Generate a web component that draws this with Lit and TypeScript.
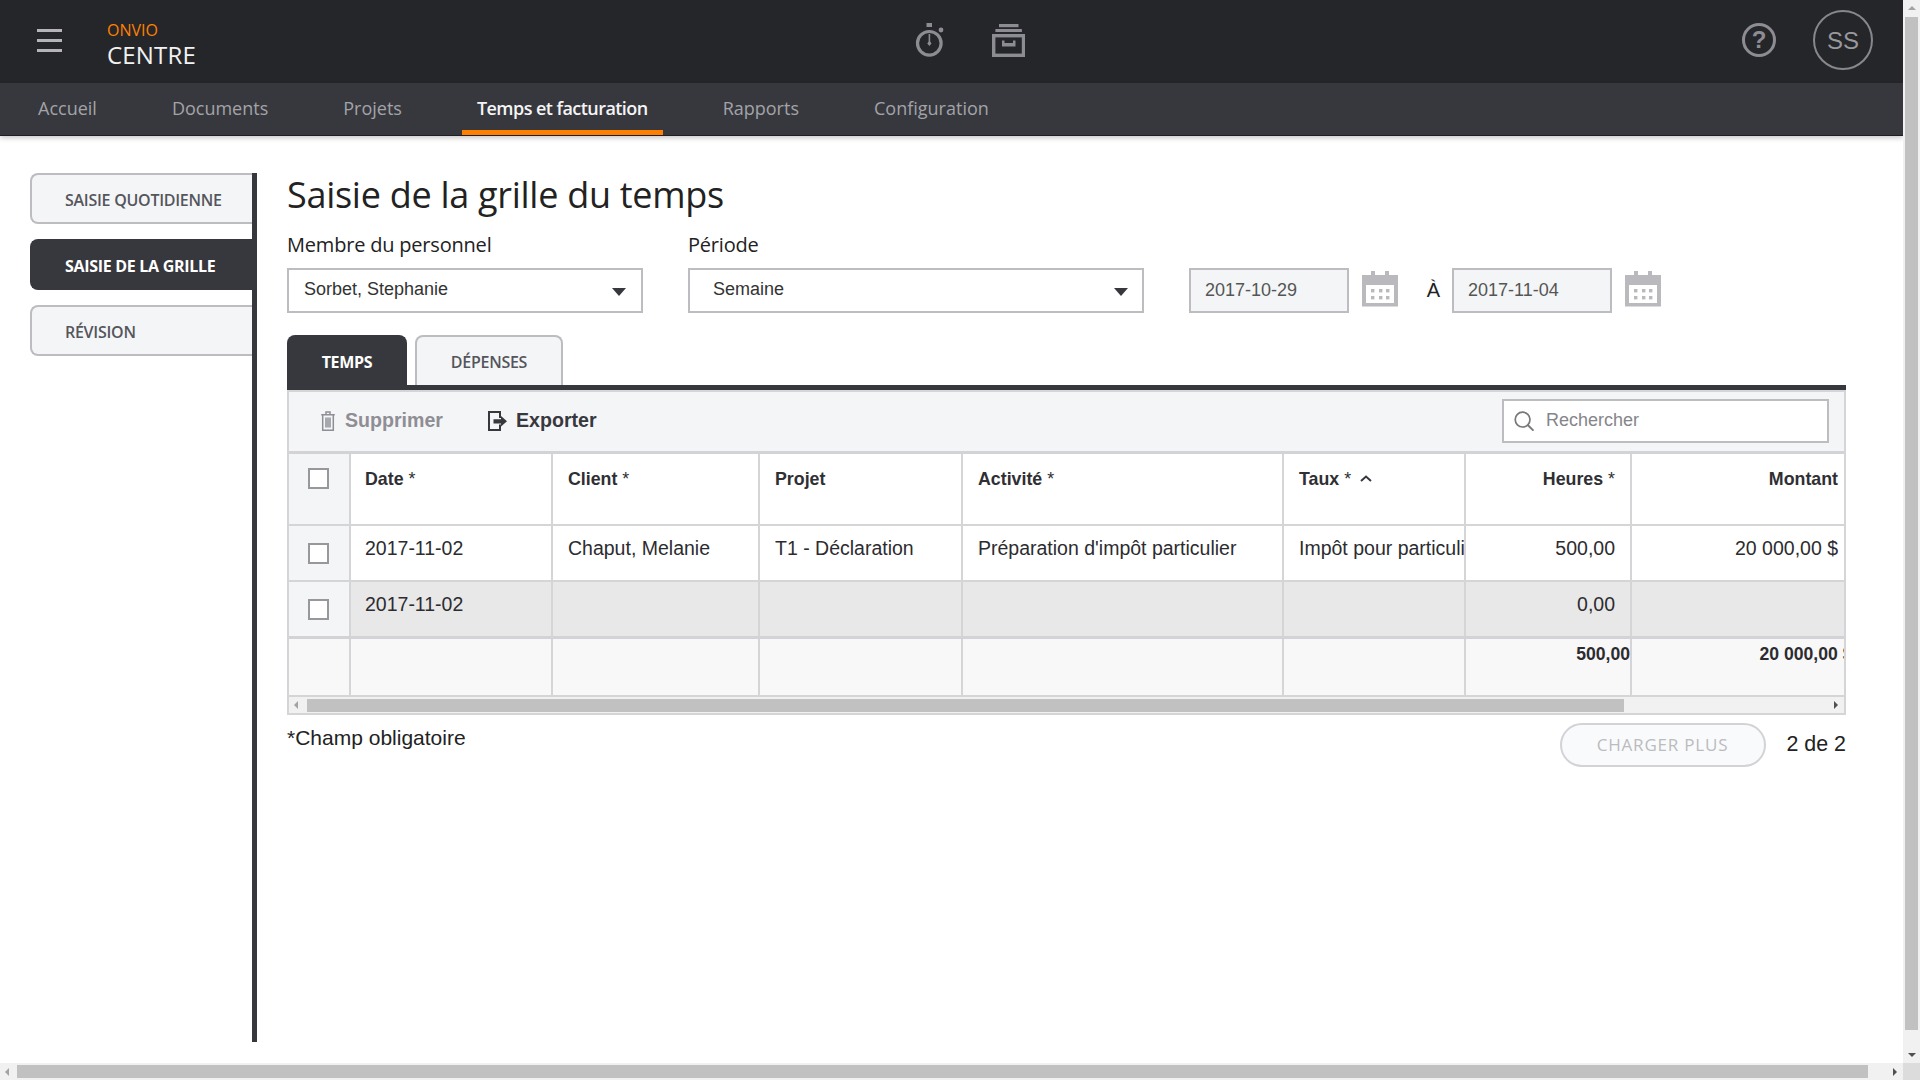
import { LitElement, html, css, svg, unsafeCSS } from "lit";
import { customElement } from "lit/decorators.js";

const COLS = unsafeCSS("62px 202px 207px 203px 321px 182px 166px 212px");

const stopwatch = html`<svg class="ic-watch" viewBox="0 0 29 34" aria-hidden="true">
  <rect x="11.5" y="0" width="5.5" height="4" fill="currentColor"/>
  <circle cx="14.3" cy="20.3" r="11.8" fill="none" stroke="currentColor" stroke-width="3.2"/>
  <circle cx="26" cy="7" r="2.4" fill="currentColor"/>
  <path d="M13.6 11h1.6v7.5l1.3 2-2.1 2.4-2.1-2.4 1.3-2z" fill="currentColor"/>
</svg>`;

const archive = html`<svg class="ic-arch" viewBox="0 0 33 33" aria-hidden="true">
  <rect x="7" y="0" width="19.5" height="3.2" fill="currentColor"/>
  <rect x="3.4" y="5" width="26.5" height="3" fill="currentColor"/>
  <rect x="1.7" y="11.7" width="29.8" height="19.6" fill="none" stroke="currentColor" stroke-width="3.4"/>
  <path d="M10 16.5h2.5v2.6h8.5v-2.6h2.5v6H10z" fill="currentColor"/>
</svg>`;

const calendar = html`<svg class="ic-cal" viewBox="0 0 36 36" aria-hidden="true">
  <path fill="#b9b9be" d="M0 4h9V0h4v4h10V0h4v4h9v31.5H0z"/>
  <rect x="4" y="14" width="28" height="18" fill="#fff"/>
  ${[9, 17, 24].map((x) => [18, 25].map((y) => svg`<rect x=${x} y=${y} width="3.4" height="3.4" fill="#b9b9be"/>`))}
</svg>`;

const trash = html`<svg class="ic-trash" viewBox="0 0 14 20" aria-hidden="true">
  <path fill="none" stroke="currentColor" stroke-width="1.5" d="M.2 3.8h13.6M5 3.6V1h4v2.6M1.7 4v15.2h10.6V4M5 6.5v10M7 6.5v10M9 6.5v10"/>
</svg>`;

const exportIcon = html`<svg class="ic-exp" viewBox="0 0 19 20" aria-hidden="true">
  <path fill="none" stroke="currentColor" stroke-width="2" d="M12 7V1H1v18h11v-5.5"/>
  <path fill="currentColor" d="M5.5 8.2h7.5V5l6 5.3-6 5.2v-3.1H5.5z"/>
</svg>`;

const search = html`<svg class="ic-search" viewBox="0 0 21 20" aria-hidden="true">
  <circle cx="8.6" cy="8.6" r="7.4" fill="none" stroke="currentColor" stroke-width="1.7"/>
  <path d="M13.7 14l5.8 5.6" fill="none" stroke="currentColor" stroke-width="1.9"/>
</svg>`;

@customElement("app-root")
export class AppRoot extends LitElement {
  static styles = css`
    :host {
      display: grid;
      grid-template-columns: 1903px 17px;
      grid-template-rows: 1063px 17px;
      width: 1920px;
      height: 1080px;
      overflow: hidden;
      font-family: "Liberation Sans", Arial, sans-serif;
      color: #222;
      background: #fff;
    }
    * { box-sizing: border-box; }
    .page { display: flex; flex-direction: column; min-width: 0; }

    /* top bars */
    .top {
      height: 83px;
      padding-bottom: 3px;
      background: #25262a;
      display: flex;
      align-items: center;
      flex: none;
      font-family: "Open Sans", sans-serif;
    }
    .burger { width: 25px; margin-left: 37px; display: flex; flex-direction: column; gap: 7px; }
    .burger i { display: block; height: 3px; background: #b4b4b9; }
    .brand { margin-left: 45px; margin-top: 10px; display: flex; flex-direction: column; width: 808px; }
    .brand b { font-weight: 400; font-size: 16px; line-height: 20px; color: #ff8000; }
    .brand span { font-size: 24px; line-height: 30px; color: #f2f2f2; letter-spacing: .2px; }
    .center { display: flex; align-items: center; gap: 48px; color: #8c8c92; }
    .ic-watch { width: 29px; height: 34px; display: block; }
    .ic-arch { width: 33px; height: 33px; display: block; }
    .right { margin-left: auto; display: flex; align-items: center; gap: 37px; margin-right: 30px; }
    .help { width: 34px; height: 34px; border: 3.4px solid #8c8c92; border-radius: 50%;
      display: flex; align-items: center; justify-content: center;
      font: 700 24px "Liberation Sans", sans-serif; color: #8c8c92; }
    .avatar { width: 60px; height: 60px; border-radius: 50%; border: 2px solid #87878c; padding-top: 2px;
      display: flex; align-items: center; justify-content: center;
      font: 400 24px "Liberation Sans", sans-serif; color: #98989d; }
    nav {
      height: 52px;
      flex: none;
      background: #37383e;
      display: flex;
      gap: 45px;
      padding-left: 23px;
      font-family: "Open Sans", sans-serif;
      font-size: 18px;
      color: #a3a3a8;
      box-shadow: 0 1px 0 #1f1f22, 0 3px 5px rgba(0, 0, 0, .22);
      position: relative;
    }
    nav a { padding: 0 15px; line-height: 50px; height: 52px; }
    nav a.on { color: #f5f5f5; font-weight: 600; border-bottom: 5px solid #ff8000; letter-spacing: -.55px; }

    /* body */
    .body { display: flex; padding-top: 38px; align-items: flex-start; }
    .side {
      width: 227px;
      height: 869px;
      margin-left: 30px;
      border-right: 5px solid #37383e;
      display: flex;
      flex-direction: column;
      gap: 15px;
      flex: none;
      font-family: "Open Sans", sans-serif;
    }
    .side div {
      height: 51px;
      width: 222px;
      padding-left: 33px;
      border: 2px solid #bcbcc1;
      border-right: 0;
      border-radius: 8px 0 0 8px;
      background: #f4f5f7;
      color: #55555c;
      font-size: 16px;
      font-weight: 600;
      line-height: 50px;
      letter-spacing: -.27px;
      white-space: nowrap;
    }
    .side div.on { background: #37383e; border-color: #37383e; color: #fff; font-weight: 700; letter-spacing: -.3px; }

    main { width: 1559px; margin-left: 30px; flex: none; }
    h1 { margin: 0; font: 400 36px/44px "Open Sans", sans-serif; color: #222; height: 59px; letter-spacing: -.28px; }
    .form { display: flex; align-items: flex-end; }
    .field { display: flex; flex-direction: column; gap: 11px; }
    .field label { font-size: 20px; line-height: 25px; font-family: "Open Sans", sans-serif; letter-spacing: -.2px; }
    .select {
      height: 45px;
      border: 2px solid #bcbcc1;
      background: #fff;
      display: flex;
      align-items: center;
      justify-content: space-between;
      padding-bottom: 2px;
      font-size: 18px;
      color: #333;
    }
    .select.a { width: 356px; padding-left: 15px; padding-right: 15px; }
    .select.b { width: 456px; margin-right: 45px; padding-left: 23px; padding-right: 14px; }
    .field.f1 { margin-right: 45px; }
    .caret { width: 0; height: 0; border-left: 7.5px solid transparent; border-right: 7.5px solid transparent; border-top: 8px solid #37383e; margin-top: 5px; }
    .date {
      width: 160px;
      height: 45px;
      border: 2px solid #bcbcc1;
      background: #f4f5f7;
      padding-left: 14px;
      line-height: 41px;
      font-size: 18px;
      color: #555;
    }
    .ic-cal { width: 36px; height: 36px; display: block; margin: 0 0 6px 13px; flex: none; }
    .a-lbl { width: 54px; text-align: right; padding-right: 12px; font-size: 20px; line-height: 46px; color: #222; align-self: flex-end; }
    .tabs { display: flex; gap: 8px; margin-top: 22px; height: 50px; font-family: "Open Sans", sans-serif; font-size: 16px; font-weight: 600; letter-spacing: -.27px; }
    .tabs div { border: 2px solid #bcbcc1; border-bottom: 0; border-radius: 8px 8px 0 0; background: #f4f5f7; color: #55555c; line-height: 50px; text-align: center; }
    .tabs .t1 { width: 120px; background: #37383e; border-color: #37383e; color: #fff; font-weight: 700; letter-spacing: -.3px; }
    .tabs .t2 { width: 148px; }

    .panel { border-top: 5px solid #37383e; }
    .inner { border: 2px solid #d5d5d8; }
    .tools {
      height: 62px;
      padding-bottom: 2px;
      background: #f4f5f7;
      border-bottom: 3px solid #d3d3d7;
      display: flex;
      align-items: center;
      font-size: 19.6px;
      font-weight: 700;
      color: #37383e;
    }
    .tool { display: flex; align-items: center; }
    .tool.off { margin-left: 32px; color: #8e8e94; gap: 10px; width: 167px; }
    .tool.exp { gap: 9px; }
    .ic-trash { width: 14px; height: 20px; display: block; }
    .ic-exp { width: 19px; height: 20px; display: block; }
    .searchbox {
      margin-left: auto;
      margin-right: 15px;
      width: 327px;
      height: 44px;
      border: 2px solid #bcbcc1;
      background: #fff;
      display: flex;
      align-items: center;
      gap: 11px;
      padding-left: 10px;
      font-size: 18px;
      font-weight: 400;
      color: #85858b;
    }
    .ic-search { width: 21px; height: 20px; display: block; color: #77777c; }

    .row { display: grid; grid-template-columns: ${COLS}; }
    .cell {
      border-right: 2px solid #d5d5d8;
      border-bottom: 2px solid #d5d5d8;
      padding: 10px 15px 0;
      font-size: 19.5px;
      line-height: 24px;
      white-space: nowrap;
      overflow: hidden;
      color: #2c2c30;
    }
    .cell.first { padding-left: 14px; }
    .cell:last-child { border-right: 0; padding-right: 7px; }
    .cell.r { text-align: right; padding-right: 15px; }
    .cell:last-child.r { padding-right: 6px; }
    .cell.chk { background: #f4f5f7; padding: 0; display: flex; justify-content: center; }
    .box { display: block; width: 21px; height: 21px; border: 2px solid #97979c; background: #fff; margin: 17px 0 0 -1px; }
    .head .cell { height: 72px; font-size: 17.8px; font-weight: 700; padding-top: 13px; color: #2f2f34; background: #fff; }
    .head .cell.chk { background: #f4f5f7; padding-top: 0; }
    .head .box { margin-top: 14px; }
    .star { font-weight: 400; }
    .sort { display: inline-block; width: 12px; height: 12px; margin-left: 4px; vertical-align: 0; }
    .r1 .cell { height: 56px; background: #fff; }
    .r1 .cell.chk { background: #f4f5f7; }
    .r2 .cell { height: 54px; background: #e8e8e8; border-bottom: 0; }
    .r2 .cell.chk { background: #f4f5f7; }
    .divider { height: 3px; background: #d3d3d7; }
    .tot .cell { height: 58px; background: #f8f8f8; font-size: 17.6px; font-weight: 700; padding-top: 2px; line-height: 26px; }
    .tot .cell.r { padding-right: 0; }
    .tot .cell:last-child.r { padding-right: 6px; }
    .tot .cell.chk { background: #f8f8f8; }
    .clip { margin-right: -14.5px; color: #2c2c30; }
    .hbar { height: 16px; background: #f1f1f1; display: flex; align-items: center; }
    .hbar .thumb { height: 13px; width: 1317px; margin-left: 8.5px; background: #c1c1c1; }
    .arr-l { width: 0; height: 0; border: 4px solid transparent; border-right: 4px solid #a3a3a3; border-left: 0; margin-left: 5px; flex: none; }
    .arr-r { width: 0; height: 0; border: 4px solid transparent; border-left: 4px solid #505050; border-right: 0; margin-left: auto; margin-right: 6px; flex: none; }

    .foot { display: flex; align-items: flex-start; margin-top: 8px; font-size: 21px; color: #222; }
    .foot .req { line-height: 30px; }
    .more {
      margin-left: auto;
      width: 206px;
      height: 44px;
      border: 2px solid #d3d3d7;
      border-radius: 22px;
      background: #f9fafb;
      color: #bbbbc0;
      font: 400 17px/40px "Open Sans", sans-serif;
      letter-spacing: .8px;
      text-align: center;
    }
    .count { margin-left: 21px; line-height: 42px; font-size: 21.4px; }

    /* window scrollbars */
    .vbar { background: #f1f1f1; display: flex; flex-direction: column; align-items: center; position: relative; }
    .vbar .thumb { width: 13px; height: 1013px; margin-top: 17px; background: #c1c1c1; }
    .arr-u { position: absolute; top: 6px; width: 0; height: 0; border: 4px solid transparent; border-bottom: 4px solid #a3a3a3; border-top: 0; }
    .arr-d { position: absolute; bottom: 6px; width: 0; height: 0; border: 4px solid transparent; border-top: 4px solid #505050; border-bottom: 0; }
    .wbar { background: #f1f1f1; display: flex; align-items: center; }
    .wbar .thumb { height: 13px; width: 1851px; margin-left: 8px; background: #c1c1c1; }
    .corner { background: #dcdcdc; }
  `;

  private chk() {
    return html`<div class="cell chk"><span class="box"></span></div>`;
  }

  render() {
    return html`
      <div class="page">
        <header class="top">
          <div class="burger"><i></i><i></i><i></i></div>
          <div class="brand"><b>ONVIO</b><span>CENTRE</span></div>
          <div class="center">${stopwatch}${archive}</div>
          <div class="right">
            <div class="help">?</div>
            <div class="avatar">SS</div>
          </div>
        </header>
        <nav>
          <a>Accueil</a><a>Documents</a><a>Projets</a><a class="on">Temps et facturation</a><a>Rapports</a><a>Configuration</a>
        </nav>
        <div class="body">
          <aside class="side">
            <div>SAISIE QUOTIDIENNE</div>
            <div class="on">SAISIE DE LA GRILLE</div>
            <div>RÉVISION</div>
          </aside>
          <main>
            <h1>Saisie de la grille du temps</h1>
            <div class="form">
              <div class="field f1">
                <label>Membre du personnel</label>
                <div class="select a"><span>Sorbet, Stephanie</span><i class="caret"></i></div>
              </div>
              <div class="field">
                <label>Période</label>
                <div class="select b"><span>Semaine</span><i class="caret"></i></div>
              </div>
              <div class="date">2017-10-29</div>
              ${calendar}
              <div class="a-lbl">À</div>
              <div class="date">2017-11-04</div>
              ${calendar}
            </div>
            <div class="tabs"><div class="t1">TEMPS</div><div class="t2">DÉPENSES</div></div>
            <div class="panel">
              <div class="inner">
                <div class="tools">
                  <div class="tool off">${trash}<span>Supprimer</span></div>
                  <div class="tool exp">${exportIcon}<span>Exporter</span></div>
                  <div class="searchbox">${search}<span>Rechercher</span></div>
                </div>
                <div class="row head">
                  ${this.chk()}
                  <div class="cell first">Date <span class="star">*</span></div>
                  <div class="cell">Client <span class="star">*</span></div>
                  <div class="cell">Projet</div>
                  <div class="cell">Activité <span class="star">*</span></div>
                  <div class="cell">Taux <span class="star">*</span>
                    <svg class="sort" viewBox="0 0 12 12" aria-hidden="true"><path d="M1 8l5-4.5L11 8" fill="none" stroke="#37383e" stroke-width="2"/></svg></div>
                  <div class="cell r">Heures <span class="star">*</span></div>
                  <div class="cell r">Montant</div>
                </div>
                <div class="row r1">
                  ${this.chk()}
                  <div class="cell first">2017-11-02</div>
                  <div class="cell">Chaput, Melanie</div>
                  <div class="cell">T1 - Déclaration</div>
                  <div class="cell">Préparation d'impôt particulier</div>
                  <div class="cell" style="padding-right:0">Impôt pour particulier</div>
                  <div class="cell r">500,00</div>
                  <div class="cell r">20 000,00 $</div>
                </div>
                <div class="row r2">
                  ${this.chk()}
                  <div class="cell first">2017-11-02</div>
                  <div class="cell"></div><div class="cell"></div><div class="cell"></div><div class="cell"></div>
                  <div class="cell r">0,00</div>
                  <div class="cell"></div>
                </div>
                <div class="divider"></div>
                <div class="row tot">
                  <div class="cell chk"></div>
                  <div class="cell"></div><div class="cell"></div><div class="cell"></div><div class="cell"></div><div class="cell"></div>
                  <div class="cell r">500,00</div>
                  <div class="cell r">20 000,00<span class="clip"> $</span></div>
                </div>
                <div class="hbar"><i class="arr-l"></i><div class="thumb"></div><i class="arr-r"></i></div>
              </div>
            </div>
            <div class="foot">
              <div class="req">*Champ obligatoire</div>
              <div class="more">CHARGER PLUS</div>
              <div class="count">2 de 2</div>
            </div>
          </main>
        </div>
      </div>
      <div class="vbar"><i class="arr-u"></i><div class="thumb"></div><i class="arr-d"></i></div>
      <div class="wbar"><i class="arr-l"></i><div class="thumb"></div><i class="arr-r"></i></div>
      <div class="corner"></div>
    `;
  }
}
